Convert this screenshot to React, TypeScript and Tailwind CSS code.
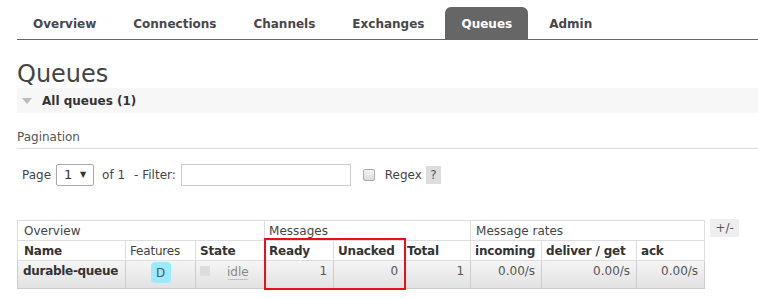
import React from "react";

const tabs = ["Overview", "Connections", "Channels", "Exchanges", "Queues", "Admin"];

const font = "font-['DejaVu_Sans',Verdana,sans-serif]";

export default function App() {
  return (
    <div className={`w-[758px] h-[299px] bg-white overflow-hidden text-[12px] text-[#444] ${font}`}>
      {/* Top navigation */}
      <nav className="ml-[17px] pt-[7px] flex gap-[5px] border-b border-[#666]">
        {tabs.map((t) => (
          <div
            key={t}
            className={`h-[32px] px-4 pt-[1px] flex items-center rounded-t-[6px] font-bold text-[12px] ${
              t === "Queues" ? "bg-[#666] text-white" : "text-[#484848]"
            }`}
          >
            {t}
          </div>
        ))}
      </nav>

      <div className="pl-[17px]">
        <h1 className="mt-[20px] text-[24px] leading-[28px] font-normal text-[#444]">Queues</h1>

        {/* Section header */}
        <div className="h-[25px] flex items-center bg-[#f7f7f7]">
          <svg width="10" height="6" viewBox="0 0 10 6" className="ml-[5px] mr-[10px]">
            <polygon points="0,0 10,0 5,6" fill="#bbb" />
          </svg>
          <span className="font-bold text-[#333]">All queues (1)</span>
        </div>

        {/* Pagination */}
        <div className="mt-[17px] pb-[3px] border-b border-[#ddd] leading-[15px] text-[#555]">Pagination</div>

        <div className="mt-[15px] pl-[5px] flex items-center h-[22px] text-[#444]">
          <span>Page</span>
          <div className="ml-[5px] w-[38px] h-[22px] border border-[#aaa] rounded-[2px] flex items-center justify-between pl-[7px] pr-[7px] text-[13px] text-[#333]">
            <span>1</span>
            <span className="text-[8px]">▼</span>
          </div>
          <span className="ml-[8px]">of 1</span>
          <span className="ml-[9px]">- Filter:</span>
          <div className="ml-[5px] w-[170px] h-[22px] border border-[#ccc]" />
          <div className="ml-[12px] w-[12px] h-[12px] rounded-[2px] border border-[#aaa] bg-gradient-to-b from-[#f4f4f4] to-[#dcdcdc]" />
          <span className="ml-[10px]">Regex</span>
          <div className="ml-[4px] w-[15px] h-[18px] bg-[#ddd] flex items-center justify-center text-[#555]">?</div>
        </div>

        {/* Table */}
        <div className="mt-[34px] flex items-start">
          <div className="relative">
            <table className="table-fixed w-[687px] border-collapse text-[12px] whitespace-nowrap">
              <colgroup>
                <col className="w-[108px]" />
                <col className="w-[70px]" />
                <col className="w-[69px]" />
                <col className="w-[69px]" />
                <col className="w-[71px]" />
                <col className="w-[66px]" />
                <col className="w-[71px]" />
                <col className="w-[95px]" />
                <col className="w-[68px]" />
              </colgroup>
              <thead>
                <tr className="h-[20px]">
                  <th colSpan={3} className="border border-[#ddd] px-[6px] text-left font-normal text-[#444] leading-[18px]">
                    Overview
                  </th>
                  <th colSpan={3} className="border border-[#ddd] px-[4px] text-left font-normal text-[#444] leading-[18px]">
                    Messages
                  </th>
                  <th colSpan={3} className="border border-[#ddd] px-[5px] text-left font-normal text-[#444] leading-[18px]">
                    Message rates
                  </th>
                </tr>
                <tr className="h-[20px] text-left text-[#333] tracking-[-0.2px]">
                  <th className="border border-[#ddd] px-[6px] font-bold leading-[18px]">Name</th>
                  <th className="border border-[#ddd] px-[4px] font-normal text-[#444] leading-[18px]">Features</th>
                  <th className="border border-[#ddd] px-[4px] font-bold leading-[18px]">State</th>
                  <th className="border border-[#ddd] px-[4px] font-bold leading-[18px]">Ready</th>
                  <th className="border border-[#ddd] px-[4px] font-bold leading-[18px]">Unacked</th>
                  <th className="border border-[#ddd] px-[2px] font-bold leading-[18px]">Total</th>
                  <th className="border border-[#ddd] px-[4px] font-bold leading-[18px]">incoming</th>
                  <th className="border border-[#ddd] px-[4px] font-bold leading-[18px]">deliver / get</th>
                  <th className="border border-[#ddd] px-[4px] font-bold leading-[18px]">ack</th>
                </tr>
              </thead>
              <tbody>
                <tr className="h-[28px] bg-gradient-to-b from-[#f5f5f5] to-[#e1e1e1] text-[#555]">
                  <td className="border border-[#ccc] px-[5px] pt-[3px] align-top font-bold text-[#333] leading-[15px] tracking-[-0.3px]">
                    durable-queue
                  </td>
                  <td className="border border-[#ccc] pt-[1px] align-top text-center">
                    <span className="inline-flex w-[20px] h-[21px] items-center justify-center rounded-[4px] bg-[#99ebff] text-[#555]">
                      D
                    </span>
                  </td>
                  <td className="border border-[#ccc] px-[4px] pt-[4px] align-top">
                    <div className="flex items-start">
                      <span className="mt-[1px] w-[10px] h-[10px] bg-[#ddd]" />
                      <span className="ml-[17px] leading-[14px] text-[#888] border-b border-dotted border-[#999] rounded-b-[3px]">
                        idle
                      </span>
                    </div>
                  </td>
                  <td className="border border-[#ccc] px-[6px] pt-[3px] align-top text-right leading-[15px]">1</td>
                  <td className="border border-[#ccc] px-[6px] pt-[3px] align-top text-right leading-[15px]">0</td>
                  <td className="border border-[#ccc] px-[6px] pt-[3px] align-top text-right leading-[15px]">1</td>
                  <td className="border border-[#ccc] px-[6px] pt-[3px] align-top text-right leading-[15px]">0.00/s</td>
                  <td className="border border-[#ccc] px-[6px] pt-[3px] align-top text-right leading-[15px]">0.00/s</td>
                  <td className="border border-[#ccc] px-[6px] pt-[3px] align-top text-right leading-[15px]">0.00/s</td>
                </tr>
              </tbody>
            </table>
            {/* highlight annotation */}
            <div className="absolute left-[247px] top-[18px] w-[142px] h-[52px] border-2 border-[#e8101a] pointer-events-none" />
          </div>
          <div className="ml-[5px] -mt-[1px] w-[29px] h-[18px] bg-[#eee] flex items-center justify-center text-[#555] text-[12px]">
            +/-
          </div>
        </div>
      </div>
    </div>
  );
}
